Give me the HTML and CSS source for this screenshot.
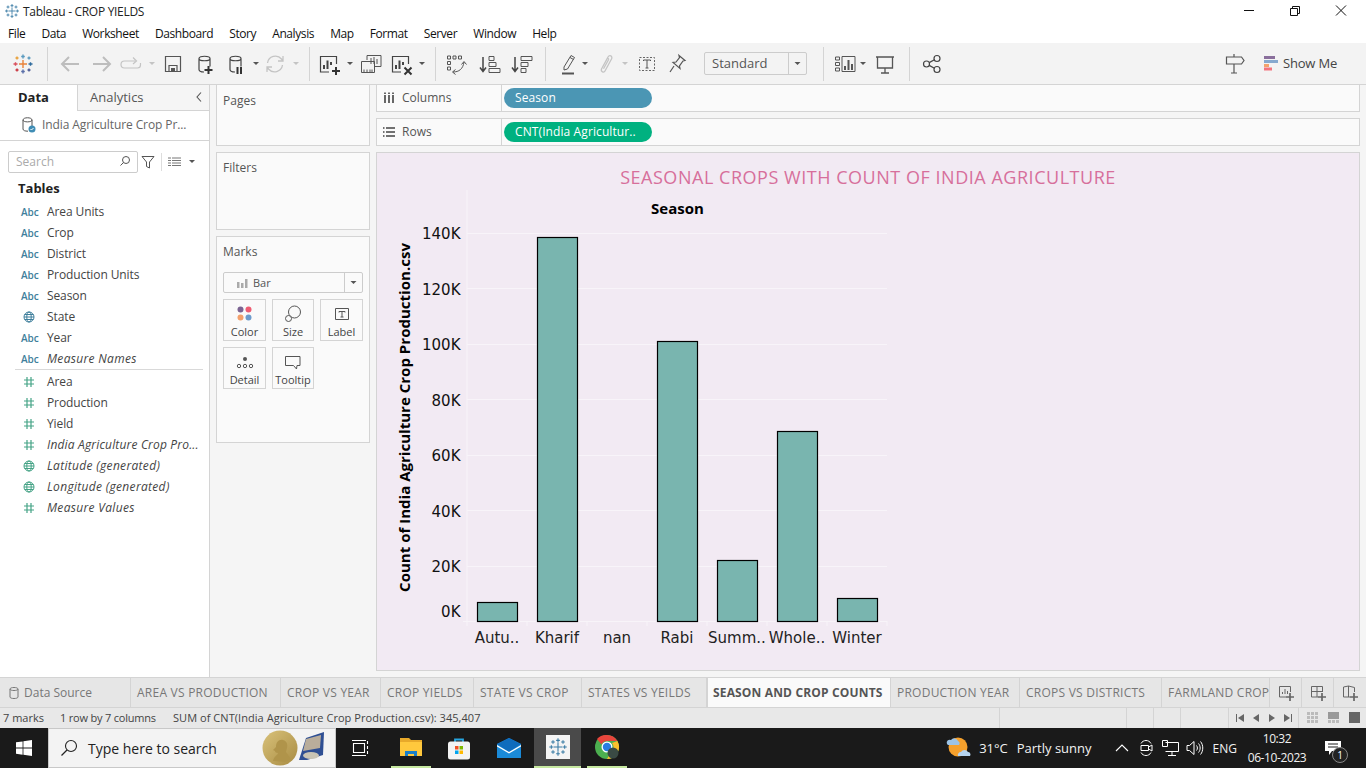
FILE: index.html
```html
<!DOCTYPE html>
<html lang="en">
<head>
<meta charset="utf-8">
<title>Tableau - CROP YIELDS</title>
<link rel="stylesheet" href="styles.css">
</head>
<body>
<svg class="defs" width="0" height="0" aria-hidden="true">
  <symbol id="tlogo" viewBox="0 0 24 24"><path d="M12 7v10M7 12h10M12 1.5v5M9.8 4h4.4M12 17.5v5M9.8 20h4.4M1.5 12h5M4 9.8v4.4M17.5 12h5M20 9.8v4.4M6 3.8v4.4M3.8 6h4.4M18 3.8v4.4M15.8 6h4.4M6 15.8v4.4M3.8 18h4.4M18 15.8v4.4M15.8 18h4.4" fill="none" stroke="currentColor" stroke-width="1.3"/></symbol>
  <symbol id="globe" viewBox="0 0 12 12"><g fill="none" stroke="currentColor" stroke-width="1"><circle cx="6" cy="6" r="5"/><ellipse cx="6" cy="6" rx="2.2" ry="5"/><path d="M1 6h10M1.7 3.5h8.6M1.7 8.5h8.6"/></g></symbol>
  <symbol id="hash" viewBox="0 0 12 12"><path d="M4 1v10M8 1v10M1 4h10M1 8h10" fill="none" stroke="currentColor" stroke-width="1.2"/></symbol>
  <symbol id="cyl" viewBox="0 0 24 24"><path d="M6 6.5c0-3 11-3 11 0v8M6 6.5c0 3 11 3 11 0M6 6.5v11c0 1.5 2 2.5 5 2.5" fill="none" stroke="currentColor" stroke-width="1.2"/></symbol>
  <symbol id="barsheet" viewBox="0 0 24 24"><path d="M11 20H2.500V4.500h16V12" fill="none" stroke="currentColor" stroke-width="1.200"/><path d="M6 17v-4M9.500 17V8.500M13 13V10" fill="none" stroke="currentColor" stroke-width="2"/></symbol>
</svg>
<div class="app">
  <header class="titlebar">
    <svg class="title-logo" width="16" height="16"><use href="#tlogo"/></svg>
    <span class="title-text">Tableau - CROP YIELDS</span>
    <div class="winctl">
      <svg width="46" height="22" viewBox="0 0 46 22"><path d="M18 10.500h10" stroke="#111" fill="none"/></svg>
      <svg width="46" height="22" viewBox="0 0 46 22"><path d="M18.500 8.500h7v7h-7zM20.500 8.500v-2h7v7h-2" stroke="#111" fill="none"/></svg>
      <svg width="46" height="22" viewBox="0 0 46 22"><path d="M18 5.500l10 10M28 5.500l-10 10" stroke="#111" fill="none"/></svg>
    </div>
  </header>
  <nav class="menubar">
    <span>File</span><span>Data</span><span>Worksheet</span><span>Dashboard</span><span>Story</span><span>Analysis</span><span>Map</span><span>Format</span><span>Server</span><span>Window</span><span>Help</span>
  </nav>
  <div class="toolbar">
    <svg class="ti" width="24" height="24" viewBox="0 0 24 24"><g fill="none" stroke-width="1.400"><path d="M12 8v8M8 12h8" stroke="#e8823a"/><path d="M12 2.500v4M10.200 4.500h3.600" stroke="#5a9abf"/><path d="M12 17.500v4M10.200 19.500h3.600" stroke="#5a6fa8"/><path d="M2.500 12h4M4.500 10.200v3.600" stroke="#d94f5c"/><path d="M17.500 12h4M19.500 10.200v3.600" stroke="#2f6c9e"/><path d="M6 4.500v3M4.500 6h3" stroke="#e8a03a"/><path d="M18 4.500v3M16.500 6h3" stroke="#5a9abf"/><path d="M6 16.500v3M4.500 18h3" stroke="#c9343f"/><path d="M18 16.500v3M16.500 18h3" stroke="#4c5a94"/></g></svg>
    <i class="tsep m12"></i>
    <svg class="ti m10" width="24" height="24" viewBox="0 0 24 24"><path d="M21 12H5M11 5l-7 7 7 7" fill="none" stroke="#bdbdbd" stroke-width="2"/></svg>
    <svg class="ti m8" width="24" height="24" viewBox="0 0 24 24"><path d="M3 12h16M13 5l7 7-7 7" fill="none" stroke="#bdbdbd" stroke-width="2"/></svg>
    <svg class="ti m5" width="24" height="24" viewBox="0 0 24 24"><path d="M16 9H5.500a3 3 0 0 0 0 7H18.500a3 3 0 0 0 3-3v-2M14 5.500l3.500 3.500-3.500 3" fill="none" stroke="#c4c4c4" stroke-width="1.200"/></svg>
    <i class="caret light m5"></i>
    <svg class="ti m5" width="24" height="24" viewBox="0 0 24 24"><path d="M4.500 4.500h15v15h-15zM8 19.500v-6h8v6" fill="none" stroke="#555" stroke-width="1.200"/><path d="M10 16h4v3.500h-4z" fill="#555"/></svg>
    <svg class="ti m8 ink" width="24" height="24" viewBox="0 0 24 24"><use href="#cyl"/><path d="M15.500 14v8M11.500 18h8" stroke="#333" stroke-width="2" fill="none"/></svg>
    <svg class="ti m7 ink" width="24" height="24" viewBox="0 0 24 24"><use href="#cyl"/><path d="M13.500 15v7M17 15v7" stroke="#333" stroke-width="2" fill="none"/></svg>
    <i class="caret m4"></i>
    <svg class="ti m3" width="24" height="24" viewBox="0 0 24 24"><path d="M4.500 11a8 8 0 0 1 14-4l1.500 2M19.500 13a8 8 0 0 1-14 4L4 15M20 4v5h-5M4 20v-5h5" fill="none" stroke="#c4c4c4" stroke-width="1.300"/></svg>
    <i class="caret light m5"></i>
    <i class="tsep m9"></i>
    <svg class="ti m8 ink" width="24" height="24" viewBox="0 0 24 24"><use href="#barsheet"/><path d="M18 15v8M14 19h8" stroke="#333" stroke-width="2" fill="none"/></svg>
    <i class="caret m4"></i>
    <svg class="ti m5" width="24" height="24" viewBox="0 0 24 24"><path d="M8 8V3.500h14v11h-6M2.500 9.500h13v11h-13zM5 20.500v-3M8 20.500v-3M11 20.500v-3M13 20.500v-3M12 12V6M15 12V5M18 12V7" fill="none" stroke="#555"/></svg>
    <svg class="ti m7 ink" width="24" height="24" viewBox="0 0 24 24"><use href="#barsheet"/><path d="M14.500 15.500l7 7M21.500 15.500l-7 7" stroke="#333" stroke-width="2" fill="none"/></svg>
    <i class="caret m4"></i>
    <i class="tsep m9"></i>
    <svg class="ti m8" width="24" height="24" viewBox="0 0 24 24"><path d="M3.500 4h3v3h-3zM9 4h3v3H9zM14.500 4h3v3h-3zM3.500 9.500h3v3h-3zM3.500 15h3v3h-3zM9 20c6 0 10-3 11-10M17.500 12.500l2.500-3 2.500 3M11.500 17.500L8.500 20l3 2.500" fill="none" stroke="#555"/></svg>
    <svg class="ti m9" width="24" height="24" viewBox="0 0 24 24"><path d="M6 5v14M3 15.500l3 4 3-4" fill="none" stroke="#444" stroke-width="1.500"/><path d="M12 4.500h5v4h-5zM12 10.500h7v4h-7zM12 16.500h11v4H12z" fill="none" stroke="#555"/></svg>
    <svg class="ti m8" width="24" height="24" viewBox="0 0 24 24"><path d="M6 5v14M3 15.500l3 4 3-4" fill="none" stroke="#444" stroke-width="1.500"/><path d="M12 4.500h11v4H12zM12 10.500h7v4h-7zM12 16.500h5v4h-5z" fill="none" stroke="#555"/></svg>
    <i class="tsep m12"></i>
    <svg class="ti m10" width="24" height="24" viewBox="0 0 24 24"><path d="M8 15L15 3.500l3.500 2L11.500 17l-3.500 1zM14 5.500l3.500 2" fill="none" stroke="#555"/><path d="M6 21.500h12" stroke="#555" stroke-width="2"/></svg>
    <i class="caret m1"></i>
    <svg class="ti m4" width="24" height="24" viewBox="0 0 24 24"><path d="M9 16L15 5c1.500-2.500 5-1 3.500 2L12 19c-1 2-4.500 1-3.500-2l5.500-10c.6-1 2-.5 1.500.7l-5 9" fill="none" stroke="#c4c4c4" stroke-width="1.300"/></svg>
    <i class="caret light m4"></i>
    <svg class="ti m6" width="24" height="24" viewBox="0 0 24 24"><path d="M4.500 5.500h15v13h-15z" fill="none" stroke="#666" stroke-dasharray="2 1.500"/><path d="M8.500 9V8h7v1M12 8v8M10.500 16h3" fill="none" stroke="#555"/></svg>
    <svg class="ti m6" width="24" height="24" viewBox="0 0 24 24"><path d="M14 3.500l6 5-2 .5-3.500 5 .5 2.500-7-6 3-.5 3.500-4.500zM9 14l-4 6" fill="none" stroke="#555" stroke-width="1.200"/></svg>
    <div class="fitsel m15"><span class="fit-label">Standard</span><span class="fit-drop"><i class="caret"></i></span></div>
    <i class="tsep m16"></i>
    <svg class="ti m9" width="24" height="24" viewBox="0 0 24 24"><path d="M2.500 5h4v3h-4zM2.500 10.500h4v3h-4zM2.500 16h4v3h-4zM9 4.500h13v15H9z" fill="none" stroke="#555"/><path d="M12 18v-4M15.500 18V8M19 18v-6" stroke="#555" stroke-width="2" fill="none"/></svg>
    <i class="caret m2"></i>
    <svg class="ti m6" width="24" height="24" viewBox="0 0 24 24"><path d="M3 5h18M4.500 5v11h15V5M12 16v5M8 21h8" fill="none" stroke="#555" stroke-width="1.300"/></svg>
    <i class="tsep m12"></i>
    <svg class="ti m10" width="24" height="24" viewBox="0 0 24 24"><g fill="none" stroke="#444" stroke-width="1.200"><circle cx="6.500" cy="12" r="3"/><circle cx="17" cy="6.500" r="3"/><circle cx="17" cy="17.500" r="3"/><path d="M9.200 10.600l5.200-2.800M9.200 13.400l5.200 2.800"/></g></svg>
    <div class="tb-right">
      <svg width="24" height="24" viewBox="0 0 24 24"><path d="M3.500 5h15l2.500 3.500-2.500 3.500h-15zM11 2v3M11 12v9M8 21h6" fill="none" stroke="#555" stroke-width="1.200"/></svg>
      <span class="showme"><svg width="20" height="16" viewBox="0 0 20 16"><path d="M3 1h11v3H3z" fill="#8a6f9c"/><path d="M3 5h14v3H3z" fill="#86a9cf"/><path d="M3 9h5v3H3z" fill="#f2a36e"/><path d="M3 12.500h8v3H3z" fill="#f2747e"/></svg>Show Me</span>
    </div>
  </div>
  <main class="main">
    <aside class="datapane">
      <div class="dtabs">
        <span class="dtab active">Data</span>
        <span class="dtab other">Analytics<svg width="8" height="12" viewBox="0 0 8 12"><path d="M6 1.500L2 6l4 4.500" fill="none" stroke="#555" stroke-width="1.100"/></svg></span>
      </div>
      <div class="dsrow">
        <svg width="17" height="18" viewBox="0 0 17 18" class="ink"><path d="M2 4c0-3 9-3 9 0v7M2 4c0 2.500 9 2.500 9 0M2 4v9c0 1.500 2 2.200 5 2.200" fill="none" stroke="#555"/><circle cx="11" cy="13" r="3.500" fill="#3f8db5"/><path d="M9.500 13l1 1 2-2" stroke="#fff" fill="none"/></svg>
        <span>India Agriculture Crop Pr...</span>
      </div>
      <div class="searchrow">
        <div class="search"><span>Search</span><svg width="12" height="12" viewBox="0 0 12 12"><circle cx="7" cy="5" r="3.500" fill="none" stroke="#555"/><path d="M4.500 7.500L1.500 10.500" stroke="#555" fill="none"/></svg></div>
        <svg class="filt" width="14" height="14" viewBox="0 0 14 14"><path d="M1 1.500h12L8.500 7v6l-3-1.500V7z" fill="none" stroke="#555"/></svg>
        <i class="vsep"></i>
        <svg class="listic" width="13" height="10" viewBox="0 0 13 10"><path d="M0 1h3M4 1h9M0 3.500h3M4 3.500h9M0 6h3M4 6h9M0 8.500h3M4 8.500h9" stroke="#777" fill="none"/></svg>
        <i class="caret m-car"></i>
      </div>
      <h2 class="tables">Tables</h2>
      <ul class="fields dims">
        <li><span class="abc">Abc</span>Area Units</li>
        <li><span class="abc">Abc</span>Crop</li>
        <li><span class="abc">Abc</span>District</li>
        <li><span class="abc">Abc</span>Production Units</li>
        <li><span class="abc">Abc</span>Season</li>
        <li><span class="fi blue"><svg width="12" height="12"><use href="#globe"/></svg></span>State</li>
        <li><span class="abc">Abc</span>Year</li>
        <li class="it"><span class="abc">Abc</span>Measure Names</li>
      </ul>
      <ul class="fields measures">
        <li><span class="fi green"><svg width="12" height="12"><use href="#hash"/></svg></span>Area</li>
        <li><span class="fi green"><svg width="12" height="12"><use href="#hash"/></svg></span>Production</li>
        <li><span class="fi green"><svg width="12" height="12"><use href="#hash"/></svg></span>Yield</li>
        <li class="it tight"><span class="fi green"><svg width="12" height="12"><use href="#hash"/></svg></span>India Agriculture Crop Pro...</li>
        <li class="it"><span class="fi green"><svg width="12" height="12"><use href="#globe"/></svg></span>Latitude (generated)</li>
        <li class="it"><span class="fi green"><svg width="12" height="12"><use href="#globe"/></svg></span>Longitude (generated)</li>
        <li class="it"><span class="fi green"><svg width="12" height="12"><use href="#hash"/></svg></span>Measure Values</li>
      </ul>
    </aside>
    <section class="cards">
      <div class="card pages"><h3>Pages</h3></div>
      <div class="card filters"><h3>Filters</h3></div>
      <div class="card marks">
        <h3>Marks</h3>
        <div class="marksel"><span class="mark-type"><svg width="12" height="10" viewBox="0 0 12 10"><path d="M1 4h2.500v6H1zM5 5h2.500v5H5zM9 1h2.500v9H9z" fill="#aaa"/></svg>Bar</span><span class="mark-drop"><i class="caret"></i></span></div>
        <div class="markgrid">
          <div class="mbtn"><svg width="18" height="18" viewBox="0 0 18 18"><circle cx="4.500" cy="4.500" r="3" fill="#7b6392"/><circle cx="12.500" cy="4.500" r="3" fill="#ee5c72"/><circle cx="4.500" cy="12.500" r="3" fill="#f3a06c"/><circle cx="12.500" cy="12.500" r="3" fill="#6d9bcc"/></svg><span>Color</span></div>
          <div class="mbtn"><svg width="18" height="18" viewBox="0 0 18 18"><circle cx="10.500" cy="7" r="6" fill="none" stroke="#555"/><circle cx="4.500" cy="13.500" r="3" fill="#fafafa" stroke="#555"/></svg><span>Size</span></div>
          <div class="mbtn"><svg width="18" height="18" viewBox="0 0 18 18"><path d="M2.500 3.500h13v11h-13z" fill="none" stroke="#555"/><path d="M6 7.500V6.500h6v1M9 6.500v5.500M7.500 12h3" fill="none" stroke="#555"/></svg><span>Label</span></div>
          <div class="mbtn"><svg width="18" height="18" viewBox="0 0 18 18"><circle cx="9" cy="6" r="2" fill="#555"/><circle cx="3" cy="13" r="1.700" fill="none" stroke="#555"/><circle cx="9" cy="13" r="1.700" fill="none" stroke="#555"/><circle cx="15" cy="13" r="1.700" fill="none" stroke="#555"/></svg><span>Detail</span></div>
          <div class="mbtn"><svg width="18" height="18" viewBox="0 0 18 18"><path d="M1.500 3.500h14.500v9h-3l-.5 3.500-3-3.500h-8z" fill="none" stroke="#555"/></svg><span>Tooltip</span></div>
        </div>
      </div>
    </section>
    <section class="workspace">
      <div class="shelf">
        <div class="shelf-label"><svg width="12" height="12" viewBox="0 0 12 12"><path d="M2 3v8M6 3v8M10 3v8M2 .5v1.500M6 .5v1.500M10 .5v1.500" stroke="#444" stroke-width="1.600" fill="none"/></svg>Columns</div>
        <div class="pill dim">Season</div>
      </div>
      <div class="shelf">
        <div class="shelf-label"><svg width="12" height="12" viewBox="0 0 12 12"><path d="M3 2h9M3 6h9M3 10h9M0 2h1.500M0 6h1.500M0 10h1.500" stroke="#444" stroke-width="1.400" fill="none"/></svg>Rows</div>
        <div class="pill meas">CNT(India Agricultur..</div>
      </div>
      <div class="view">
        <svg class="chart" width="983" height="517" viewBox="377 153 983 517">
          <text class="ctitle" x="868" y="184" text-anchor="middle">SEASONAL CROPS WITH COUNT OF INDIA AGRICULTURE</text>
          <text class="chead" x="677.500" y="214" text-anchor="middle">Season</text>
          <text class="ytitle" transform="translate(410 417.500) rotate(-90)" text-anchor="middle">Count of India Agriculture Crop Production.csv</text>
          <g class="grid"><path d="M467 190V626M463 621.500H887M467 566.500H887M467 510.500H887M467 455.500H887M467 399.500H887M467 344.500H887M467 288.500H887M467 233.500H887M527 621V626M587 621V626M647 621V626M707 621V626M767 621V626M827 621V626M887 621V626"/></g>
          <g class="ylab" text-anchor="end">
            <text x="460.500" y="239">140K</text><text x="460.500" y="294.500">120K</text><text x="460.500" y="350">100K</text><text x="460.500" y="405.500">80K</text><text x="460.500" y="461">60K</text><text x="460.500" y="516.500">40K</text><text x="460.500" y="572">20K</text><text x="460.500" y="616.500">0K</text>
          </g>
          <g class="bars">
            <rect x="477.500" y="602.500" width="40" height="19"/>
            <rect x="537.500" y="237.500" width="40" height="384"/>
            <rect x="657.500" y="341.500" width="40" height="280"/>
            <rect x="717.500" y="560.500" width="40" height="61"/>
            <rect x="777.500" y="431.500" width="40" height="190"/>
            <rect x="837.500" y="598.500" width="40" height="23"/>
          </g>
          <g class="xlab" text-anchor="middle">
            <text x="497" y="642.500">Autu..</text><text x="557" y="642.500">Kharif</text><text x="617" y="642.500">nan</text><text x="677" y="642.500">Rabi</text><text x="737" y="642.500">Summ..</text><text x="797" y="642.500">Whole..</text><text x="857" y="642.500">Winter</text>
          </g>
        </svg>
      </div>
    </section>
  </main>
  <div class="tabs">
    <span class="tab ds"><svg width="12" height="14" viewBox="0 0 12 14"><path d="M2 3c0-2 8-2 8 0v8c0 2-8 2-8 0zM2 3c0 2 8 2 8 0" fill="none" stroke="#777"/></svg>Data Source</span>
    <span class="tab w149">AREA VS PRODUCTION</span>
    <span class="tab w100">CROP VS YEAR</span>
    <span class="tab w93">CROP YIELDS</span>
    <span class="tab w108">STATE VS CROP</span>
    <span class="tab w125">STATES VS YEILDS</span>
    <span class="tab sel">SEASON AND CROP COUNTS</span>
    <span class="tab w129">PRODUCTION YEAR</span>
    <span class="tab w142">CROPS VS DISTRICTS</span>
    <span class="tab w108 clip">FARMLAND CROP</span>
    <span class="tab icon"><svg width="18" height="18" viewBox="0 0 18 18"><path d="M9 13H2.500V2.500h11V8M5.500 10V8M8 10V5M10.500 10V7" fill="none" stroke="#666"/><path d="M13 9v8M9 13h8" stroke="#666" stroke-width="1.700" fill="none"/></svg></span>
    <span class="tab icon"><svg width="18" height="18" viewBox="0 0 18 18"><path d="M9 13H2.500V2.500h11V8M2.500 7.500h11M8 2.500V13" fill="none" stroke="#666"/><path d="M13 9v8M9 13h8" stroke="#666" stroke-width="1.700" fill="none"/></svg></span>
    <span class="tab icon"><svg width="18" height="18" viewBox="0 0 18 18"><path d="M9 13H2.500V3l5-1v11M7.500 2l6 1.500V8" fill="none" stroke="#666"/><path d="M13 9v8M9 13h8" stroke="#666" stroke-width="1.700" fill="none"/></svg></span>
  </div>
  <footer class="status">
    <span class="st-a">7 marks</span><span class="st-b">1 row by 7 columns</span><span class="st-c">SUM of CNT(India Agriculture Crop Production.csv): 345,407</span>
    <i class="st-cell c127"></i><i class="st-cell c27"></i><i class="st-cell c27"></i><i class="st-cell c48"></i>
    <div class="st-nav">
      <svg width="12" height="10" viewBox="0 0 12 10"><path d="M2.500 1v8" stroke="#666" fill="none"/><path d="M10 1v8L4 5z" fill="#666"/></svg>
      <svg width="12" height="10" viewBox="0 0 12 10"><path d="M9 1v8L3 5z" fill="#666"/></svg>
      <svg width="12" height="10" viewBox="0 0 12 10"><path d="M3 1v8l6-4z" fill="#666"/></svg>
      <svg width="12" height="10" viewBox="0 0 12 10"><path d="M9.500 1v8" stroke="#666" fill="none"/><path d="M2 1v8l6-4z" fill="#666"/></svg>
    </div>
    <div class="st-view">
      <svg width="12" height="12" viewBox="0 0 12 12"><path d="M0 0h3v3H0zM4 0h3v3H4zM8 0h3v3H8zM0 4h3v3H0zM4 4h3v3H4zM8 4h3v3H8zM0 8h3v3H0zM4 8h3v3H4zM8 8h3v3H8z" fill="#bbb"/></svg>
      <svg width="12" height="12" viewBox="0 0 12 12"><path d="M0 0h11v7H0z" fill="#999"/><path d="M0 8h3v3H0zM4 8h3v3H4zM8 8h3v3H8z" fill="#bbb"/></svg>
      <svg width="12" height="12" viewBox="0 0 12 12"><path d="M0 0h11v11H0z" fill="#666"/></svg>
    </div>
  </footer>
  <div class="taskbar">
    <div class="start"><svg width="16" height="16" viewBox="0 0 16 16"><path d="M0 2.300l6.600-.9v6.200H0zM7.400 1.300L16 0v7.600H7.400zM0 8.400h6.600v6.300L0 13.700zM7.400 8.400H16V16l-8.600-1.200z" fill="#fff"/></svg></div>
    <div class="tsearch">
      <svg width="18" height="18" viewBox="0 0 18 18"><circle cx="11" cy="7" r="5.500" fill="none" stroke="#222" stroke-width="1.100"/><path d="M7 11l-5.500 5.500" stroke="#222" stroke-width="1.300"/></svg>
      <span>Type here to search</span>
      <svg class="medal" width="64" height="38" viewBox="0 0 64 38"><defs><linearGradient id="gold" x1="0" y1="0" x2="1" y2="1"><stop offset="0" stop-color="#d9c27a"/><stop offset="1" stop-color="#a88b42"/></linearGradient></defs><circle cx="18" cy="19" r="17.500" fill="url(#gold)"/><path d="M11 32c1-5 5-6 5-8-2 0-3-1-3-2l-2-1 3-3c0-5 3-8 7-7 4 1 5 5 4 8l-1 4 5 7-6 3z" fill="#b0944a"/><path d="M37 31l7-22 18-6-1 23-16 5z" fill="#2f4f93"/><path d="M44 10l15-4-1 13-17 3z" fill="#b9ad9b"/><ellipse cx="49" cy="26.500" rx="8" ry="3.500" fill="#c9c4b4"/></svg>
    </div>
    <svg class="tv" width="20" height="18" viewBox="0 0 20 18"><path d="M3.500 4.500h11v9h-11zM2 1.500h14M2 16.500h14M17.500 2v3M17.500 7v3M17.500 12v3" fill="none" stroke="#fff" stroke-width="1.100"/></svg>
    <div class="tk explorer"><svg width="24" height="22" viewBox="0 0 24 22"><path d="M1 2h9l2 2h11v5H1z" fill="#e8a92a"/><path d="M1 6h22v14H1z" fill="#ffc83d"/><path d="M6 20v-5h12v5h-3v-2H9v2z" fill="#1a7fc9"/></svg></div>
    <div class="tk store"><svg width="24" height="24" viewBox="0 0 24 24"><path d="M8 6V3.500h8V6" fill="none" stroke="#27a6e0" stroke-width="1.800"/><rect x="1" y="5.500" width="22" height="18" rx="2.500" fill="#f3f3f3"/><path d="M8 10h3.500v3.500H8z" fill="#f25022"/><path d="M12.500 10H16v3.500h-3.500z" fill="#7fba00"/><path d="M8 14.500h3.500V18H8z" fill="#00a4ef"/><path d="M12.500 14.500H16V18h-3.500z" fill="#ffb900"/></svg></div>
    <div class="tk mail"><svg width="26" height="22" viewBox="0 0 26 22"><path d="M1 7l12-6 12 6v14H1z" fill="#1a8ad8"/><path d="M1 7l12 8 12-8-12-6z" fill="#0f6cbd"/><path d="M1 8l12 7 12-7 0 1.500-12 7-12-7z" fill="#fff"/></svg></div>
    <div class="tk tableau"><span class="tb-ico"><svg width="20" height="20"><use href="#tlogo"/></svg></span></div>
    <div class="tk chrome"><svg width="26" height="26" viewBox="0 0 26 26"><circle cx="13" cy="13" r="12" fill="#4caf50"/><path d="M13 1a12 12 0 0 1 10.400 6H13a6 6 0 0 0-5.500 3.500L3 5A12 12 0 0 1 13 1z" fill="#e8453c"/><path d="M23.400 7A12 12 0 0 1 13 25l5-8.500A6 6 0 0 0 18 9z" fill="#fbc02d"/><circle cx="13" cy="13" r="5.500" fill="#fff"/><circle cx="13" cy="13" r="4.200" fill="#2a7de1"/><circle cx="19" cy="19" r="5.500" fill="#3a4a44"/></svg></div>
    <div class="tray">
      <svg class="weather" width="26" height="26" viewBox="0 0 26 26"><circle cx="12" cy="12" r="9.500" fill="#f5a02c"/><path d="M1 9a3 3 0 0 1 4-4 4 4 0 0 1 7 1 2.500 2.500 0 0 1 1 4H2z" fill="#9cc3e6"/><path d="M12 21a3 3 0 0 1 3-4 4 4 0 0 1 7 0 2.500 2.500 0 0 1 2 4z" fill="#b4d3ef"/></svg>
      <span class="temp">31°C</span><span class="sky">Partly sunny</span>
      <svg class="tr-up" width="14" height="10" viewBox="0 0 14 10"><path d="M1 8l6-6 6 6" fill="none" stroke="#fff" stroke-width="1.100"/></svg>
      <svg class="tr-meet" width="14" height="18" viewBox="0 0 14 18"><path d="M1 4.500c2-4 8-4 10 0M1 13.500c2 4 8 4 10 0M1 6.500h7.500v5H1zM8.500 8l3.500-2v6l-3.500-2z" fill="none" stroke="#fff"/></svg>
      <svg class="tr-net" width="18" height="18" viewBox="0 0 18 18"><path d="M3.500 3.500h13v9h-13M10 12.500v3.500M6 16.500h8M.5 1.500h5v6h-5z" fill="none" stroke="#fff"/></svg>
      <svg class="tr-vol" width="18" height="16" viewBox="0 0 18 16"><path d="M1 5.500h2.500L8 1.500v13l-4.500-4H1zM10.500 5.500c1.200 1.500 1.200 3.500 0 5M12.500 3.500c2.200 2.500 2.200 6.500 0 9M14.500 1.500c3 3.500 3 9.500 0 13" fill="none" stroke="#fff"/></svg>
      <span class="eng">ENG</span>
      <div class="clock"><span>10:32</span><span>06-10-2023</span></div>
      <div class="notif"><svg width="18" height="16" viewBox="0 0 18 16"><path d="M1 1h16v10h-9l-3 4v-4H1z" fill="#fff"/><path d="M4 4h10M4 7h10" stroke="#1a1a1a"/></svg><span class="badge">1</span></div>
    </div>
  </div>
</div>
</body>
</html>
```
FILE: styles.css
```css
* { box-sizing: border-box; }
html, body { margin: 0; padding: 0; }
body { font-family: "Open Sans", "Liberation Sans", sans-serif; font-size: 12px; color: #333; background: #fff; overflow: hidden; }
svg { display: block; flex: none; }
.defs { position: absolute; }
i { display: block; flex: none; font-style: normal; }
ul, h2, h3 { margin: 0; padding: 0; list-style: none; }
.app { width: 1366px; height: 768px; display: flex; flex-direction: column; overflow: hidden; }

.titlebar { height: 22px; display: flex; align-items: center; padding-left: 4px; flex: none; }
.title-logo { color: #3a7ca5; margin-right: 3px; }
.title-text { color: #222; font-size: 12px; letter-spacing: -.3px; }
.winctl { margin-left: auto; display: flex; margin-right: 2px; }
.menubar { height: 21px; display: flex; align-items: center; padding: 2px 0 0 8px; gap: 16px; color: #111; font-size: 12px; letter-spacing: -.4px; flex: none; }

.toolbar { height: 42px; background: #f3f3f3; border-bottom: 1px solid #d4d4d4; display: flex; align-items: center; padding-left: 11px; flex: none; }
.tsep { width: 1px; height: 34px; background: #d4d4d4; }
.ink { color: #444; }
.caret { width: 8px; height: 3px; background: #555; clip-path: polygon(1px 0, 7px 0, 4px 3px); }
.caret.light { background: #c4c4c4; }
.m1 { margin-left: 1px; } .m2 { margin-left: 2px; } .m3 { margin-left: 3px; } .m4 { margin-left: 4px; } .m5 { margin-left: 5px; } .m6 { margin-left: 6px; } .m7 { margin-left: 7px; } .m8 { margin-left: 8px; } .m9 { margin-left: 9px; } .m10 { margin-left: 10px; } .m12 { margin-left: 12px; } .m15 { margin-left: 15px; } .m16 { margin-left: 16px; }
.fitsel { width: 103px; height: 23px; border: 1px solid #ccc; border-radius: 2px; display: flex; align-items: center; color: #555; font-size: 13px; }
.fit-label { flex: 1; padding: 0 0 2px 7px; }
.fit-drop { width: 18px; height: 21px; border-left: 1px solid #ccc; display: flex; align-items: center; justify-content: center; }
.tb-right { margin-left: auto; display: flex; align-items: center; padding-right: 29px; }
.showme { display: flex; align-items: center; margin-left: 14px; padding-bottom: 1px; font-size: 13px; color: #444; letter-spacing: -.2px; }
.showme svg { margin-right: 2px; }

.main { flex: 1; display: flex; min-height: 0; background: #f5f5f5; }
.datapane { width: 210px; background: #fff; border-right: 1px solid #d4d4d4; flex: none; display: flex; flex-direction: column; }
.dtabs { height: 26px; display: flex; flex: none; }
.dtab { display: flex; align-items: center; font-size: 13px; padding-bottom: 2px; }
.dtab.active { width: 77px; padding-left: 18px; font-weight: 700; color: #222; }
.dtab.other { flex: 1; padding-left: 12px; background: #f5f5f5; border-left: 1px solid #d4d4d4; border-bottom: 1px solid #d4d4d4; color: #555; justify-content: space-between; padding-right: 6px; }
.dsrow { height: 30px; display: flex; align-items: center; padding: 0 0 2px 21px; gap: 4px; border-bottom: 1px solid #d4d4d4; color: #666; font-size: 12px; flex: none; letter-spacing: -.1px; }
.searchrow { display: flex; align-items: center; padding: 9px 0 0 8px; height: 32px; flex: none; }
.search { width: 130px; height: 22px; border: 1px solid #ccc; border-radius: 2px; display: flex; align-items: center; justify-content: space-between; padding: 0 6px 1px 7px; color: #aaa; font-size: 12px; }
.filt { margin-left: 3px; }
.vsep { width: 1px; height: 18px; background: #ddd; margin-left: 6px; }
.listic { margin-left: 6px; }
.m-car { margin-left: 7px; }
.tables { font-size: 13px; font-weight: 700; color: #222; padding-left: 18px; height: 24px; line-height: 30px; flex: none; margin-bottom: 4px; }
.fields { flex: none; margin: 0 6px 0 15px; }
.fields li { height: 21px; display: flex; align-items: center; color: #444; font-size: 12px; white-space: nowrap; letter-spacing: -.1px; }
.fields li.it { font-style: italic; letter-spacing: .32px; }
.fields li.tight { letter-spacing: .17px; }
.abc { width: 32px; padding-left: 6px; color: #3f7f9c; font-size: 10px; font-weight: 600; font-style: normal; letter-spacing: 0; }
.fi { width: 32px; padding-left: 8px; letter-spacing: 0; }
.fi.blue { color: #3f7f9c; }
.fi.green { color: #45a386; }
.dims { border-bottom: 1px solid #d9d9d9; }
.measures { padding-top: 1px; }

.cards { width: 166px; flex: none; margin-top: -1px; padding: 0 6px; display: flex; flex-direction: column; gap: 6px; }
.card { background: #fafafa; border: 1px solid #d4d4d4; padding: 8px 6px; flex: none; }
.card h3 { font-weight: 400; font-size: 12px; color: #555; line-height: 14px; }
.pages { height: 62px; padding-top: 9px; }
.filters { height: 78px; }
.marks { height: 207px; }
.marksel { margin-top: 13px; height: 21px; border: 1px solid #ccc; border-radius: 2px; display: flex; align-items: center; font-size: 11px; color: #555; }
.mark-type { flex: 1; display: flex; align-items: center; gap: 5px; padding-left: 12px; }
.mark-drop { width: 18px; height: 19px; border-left: 1px solid #ccc; display: flex; align-items: center; justify-content: center; }
.markgrid { margin-top: 6px; display: grid; grid-template-columns: 43px 42px 43px; grid-auto-rows: 42px; gap: 6px; }
.mbtn { border: 1px solid #d4d4d4; display: flex; flex-direction: column; align-items: center; padding-top: 5px; font-size: 11px; color: #444; background: #fafafa; }
.mbtn span { margin-top: 2px; line-height: 14px; }

.workspace { flex: 1; min-width: 0; margin-top: -1px; display: flex; flex-direction: column; gap: 6px; padding-right: 6px; }
.shelf { height: 28px; flex: none; border: 1px solid #d4d4d4; background: #fafafa; display: flex; align-items: center; }
.shelf-label { width: 125px; height: 100%; border-right: 1px solid #d4d4d4; display: flex; align-items: center; gap: 7px; padding: 0 0 1px 6px; font-size: 12px; color: #555; flex: none; }
.pill { width: 148px; height: 20px; margin-left: 2px; border-radius: 10px; color: #fff; font-size: 12px; padding-left: 11px; line-height: 20px; letter-spacing: .1px; white-space: nowrap; }
.pill.dim { background: #4b96b4; }
.pill.meas { background: #00b180; }
.view { flex: 1; border: 1px solid #d4d4d4; background: #f2eaf3; min-height: 0; margin-bottom: 6px; }
.ctitle { font-family: "Open Sans", sans-serif; font-size: 18px; font-weight: 500; fill: #d76f9b; letter-spacing: .53px; }
.chead { font-family: "Open Sans", sans-serif; font-weight: 700; font-size: 15px; fill: #000; }
.ytitle { font-family: "Open Sans", sans-serif; font-weight: 700; font-size: 15px; fill: #000; letter-spacing: .02px; }
.grid path { fill: none; stroke: #f8f4f9; stroke-width: 1; }
.ylab text { font-family: "DejaVu Sans", sans-serif; font-size: 15px; fill: #111; }
.xlab text { font-family: "DejaVu Sans", sans-serif; font-size: 15px; fill: #222; }
.bars rect { fill: #79b5af; stroke: #000; stroke-width: 1.200; }

.tabs { height: 31px; flex: none; background: #e6e6e6; border-top: 1px solid #d4d4d4; border-bottom: 1px solid #d4d4d4; display: flex; }
.tab { display: flex; align-items: center; padding-left: 6px; border-right: 1px solid #d4d4d4; color: #777; font-size: 12px; letter-spacing: .24px; flex: none; white-space: nowrap; overflow: hidden; }
.tab.ds { width: 131px; padding-left: 8px; gap: 4px; letter-spacing: 0; }
.w149 { width: 150px; } .w100 { width: 100px; } .w93 { width: 93px; } .w108 { width: 108px; } .w125 { width: 125px; } .w129 { width: 129px; } .w142 { width: 142px; }
.tab.sel { width: 184px; padding-left: 5px; background: #fafafa; font-weight: 700; color: #555; border-left: 1px solid #d4d4d4; letter-spacing: .16px; }
.tab.icon { width: 32px; padding-left: 0; justify-content: center; }
.tab.icon:last-child { border-right: 0; }

.status { height: 20px; flex: none; background: #e8e8e8; display: flex; align-items: stretch; font-size: 11px; color: #444; }
.status span { line-height: 20px; white-space: nowrap; }
.st-a { width: 60px; padding-left: 3px; }
.st-b { width: 113px; letter-spacing: -.2px; }
.st-c { width: 826px; letter-spacing: .05px; }
.st-cell { border-left: 1px solid #d4d4d4; }
.c127 { width: 127px; } .c27 { width: 27px; } .c48 { width: 48px; }
.st-nav { width: 70px; border-left: 1px solid #d4d4d4; display: flex; align-items: center; padding-left: 5px; gap: 4px; }
.st-view { flex: 1; border-left: 1px solid #d4d4d4; display: flex; align-items: center; padding-left: 8px; gap: 9px; }

.taskbar { height: 40px; flex: none; background: #1a1a1a; display: flex; align-items: center; color: #fff; }
.start { width: 48px; height: 100%; display: flex; align-items: center; justify-content: center; }
.tsearch { width: 288px; height: 100%; background: #f3f3f3; border: 1px solid #c8c8c8; display: flex; align-items: center; padding-left: 11px; color: #222; font-size: 14px; gap: 10px; }
.medal { margin-left: auto; margin-right: 9px; }
.tv { margin-left: 14px; }
.tk { height: 100%; display: flex; align-items: center; justify-content: center; flex: none; }
.explorer { width: 40px; margin-left: 21px; border-bottom: 2px solid #c6e8a0; }
.store { width: 48px; margin-left: 4px; }
.mail { width: 48px; margin-left: 2px; }
.tableau { width: 47px; background: #4a4a4a; border-bottom: 2px solid #c6e8a0; margin-left: 1px; }
.tb-ico { width: 24px; height: 24px; background: #f4f4f4; color: #3a7ca5; display: flex; align-items: center; justify-content: center; }
.chrome { width: 40px; margin-left: 6px; border-bottom: 2px solid #c6e8a0; }
.tray { margin-left: auto; display: flex; align-items: center; height: 100%; font-size: 13px; color: #f2f2f2; }
.temp { margin-left: 7px; }
.sky { margin-left: 9px; }
.tr-up { margin-left: 23px; }
.tr-meet { margin-left: 11px; }
.tr-net { margin-left: 8px; }
.tr-vol { margin-left: 6px; }
.eng { font-size: 12px; margin-left: 9px; }
.clock { width: 86px; margin-left: -3px; display: flex; flex-direction: column; align-items: center; font-size: 12px; line-height: 19px; letter-spacing: -.4px; }
.notif { width: 46px; height: 100%; padding-right: 20px; position: relative; display: flex; align-items: center; justify-content: center; }
.badge { position: absolute; left: 12px; top: 19px; width: 16px; height: 16px; border-radius: 50%; border: 1px solid #888; background: #222; font-size: 10px; line-height: 14px; text-align: center; color: #fff; }
```
